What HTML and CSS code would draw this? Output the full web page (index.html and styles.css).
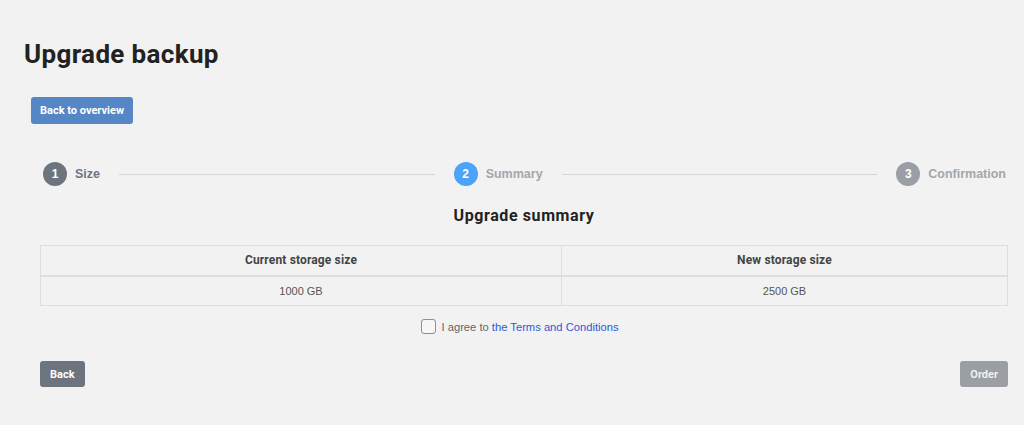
FILE: index.html
```html
<!DOCTYPE html>
<html lang="en">
<head>
<meta charset="utf-8">
<title>Upgrade backup</title>
<link rel="stylesheet" href="styles.css">
</head>
<body>
<div class="page">
  <h1 class="title">Upgrade backup</h1>
  <button class="btn btn-primary btn-overview" type="button">Back to overview</button>

  <div class="content">
    <div class="stepper">
      <div class="step step-done">
        <span class="step-num">1</span>
        <span class="step-label">Size</span>
      </div>
      <div class="step-line"></div>
      <div class="step step-active">
        <span class="step-num">2</span>
        <span class="step-label">Summary</span>
      </div>
      <div class="step-line"></div>
      <div class="step step-todo">
        <span class="step-num">3</span>
        <span class="step-label">Confirmation</span>
      </div>
    </div>

    <h2 class="subtitle">Upgrade summary</h2>

    <table class="summary">
      <thead>
        <tr>
          <th class="col-current">Current storage size</th>
          <th>New storage size</th>
        </tr>
      </thead>
      <tbody>
        <tr>
          <td>1000 GB</td>
          <td>2500 GB</td>
        </tr>
      </tbody>
    </table>

    <label class="agree">
      <span class="checkbox"></span>
      <span class="agree-text">I agree to <a href="#" class="link">the Terms and Conditions</a></span>
    </label>

    <div class="actions">
      <button class="btn btn-secondary" type="button">Back</button>
      <button class="btn btn-secondary btn-disabled" type="button">Order</button>
    </div>
  </div>
</div>
</body>
</html>
```

FILE: styles.css
```css
* { box-sizing: border-box; }

html, body {
  margin: 0;
  padding: 0;
  background: #f2f2f2;
}

body {
  font-family: "Liberation Sans", Arial, sans-serif;
  color: #333;
  width: 1024px;
  height: 425px;
  overflow: hidden;
}

.page {
  padding: 38px 16px 0 24px;
}

.title {
  margin: 0;
  font-family: Roboto, "Liberation Sans", sans-serif;
  font-weight: 700;
  font-size: 26px;
  line-height: 32px;
  color: #222;
  letter-spacing: 0.35px;
}

.btn {
  display: inline-block;
  border: 0;
  border-radius: 3px;
  font-family: Roboto, "Liberation Sans", sans-serif;
  font-weight: 700;
  font-size: 11px;
  line-height: 13px;
  color: #fff;
  padding: 7px 9px;
  height: 27px;
  cursor: pointer;
}

.btn-primary {
  background: #5586c6;
}

.btn-overview {
  margin: 27px 0 0 7px;
}

.btn-secondary {
  background: #6c757d;
  height: 26px;
  padding: 6px 10px;
}

.btn-disabled {
  background: #9b9fa4;
  color: #eef0f2;
}

.content {
  padding-left: 16px;
}

.stepper {
  display: flex;
  align-items: center;
  margin-top: 38px;
  padding: 0 2px 0 3px;
  height: 24px;
}

.step {
  display: flex;
  align-items: center;
  gap: 8px;
}

.step-num {
  width: 24px;
  height: 24px;
  border-radius: 50%;
  display: flex;
  align-items: center;
  justify-content: center;
  color: #fff;
  font-family: "Liberation Sans", Arial, sans-serif;
  font-weight: 700;
  font-size: 12px;
}

.step-label {
  font-family: "Liberation Sans", Arial, sans-serif;
  font-weight: 700;
  font-size: 12.5px;
}

.step-done .step-num { background: #6c757d; }
.step-done .step-label { color: #6c757d; }

.step-active .step-num { background: #4da3f8; }
.step-active .step-label { color: #a3a7ab; }

.step-todo .step-num { background: #9a9fa5; }
.step-todo .step-label { color: #a3a7ab; }

.step-line {
  flex: 1;
  height: 1px;
  background: #d6d6d6;
  margin: 0 19px;
}

.subtitle {
  margin: 20px 0 0;
  text-align: center;
  font-family: Roboto, "Liberation Sans", sans-serif;
  font-weight: 700;
  font-size: 16px;
  line-height: 20px;
  color: #222;
  letter-spacing: 0.6px;
}

.summary {
  margin-top: 19px;
  width: 968px;
  border-collapse: collapse;
  font-size: 11px;
}

.summary th,
.summary td {
  border: 1px solid #dedede;
  text-align: center;
  height: 30px;
  padding: 0 8px;
}

.summary th {
  font-family: Roboto, "Liberation Sans", sans-serif;
  font-weight: 700;
  font-size: 12px;
  letter-spacing: 0.15px;
  color: #444;
  border-bottom: 2px solid #dedede;
}

.summary td {
  color: #555;
}

.col-current {
  width: 521px;
}

.agree {
  display: flex;
  align-items: center;
  justify-content: center;
  gap: 5px;
  margin-top: 13px;
  padding-right: 8px;
  font-size: 11.2px;
  color: #666;
}

.checkbox {
  width: 15px;
  height: 15px;
  border: 1.5px solid #8f8f8f;
  border-radius: 3px;
  background: #f7f7f7;
}

.link {
  color: #2e59d9;
  text-decoration: none;
}

.actions {
  display: flex;
  justify-content: space-between;
  margin-top: 27px;
}
```
